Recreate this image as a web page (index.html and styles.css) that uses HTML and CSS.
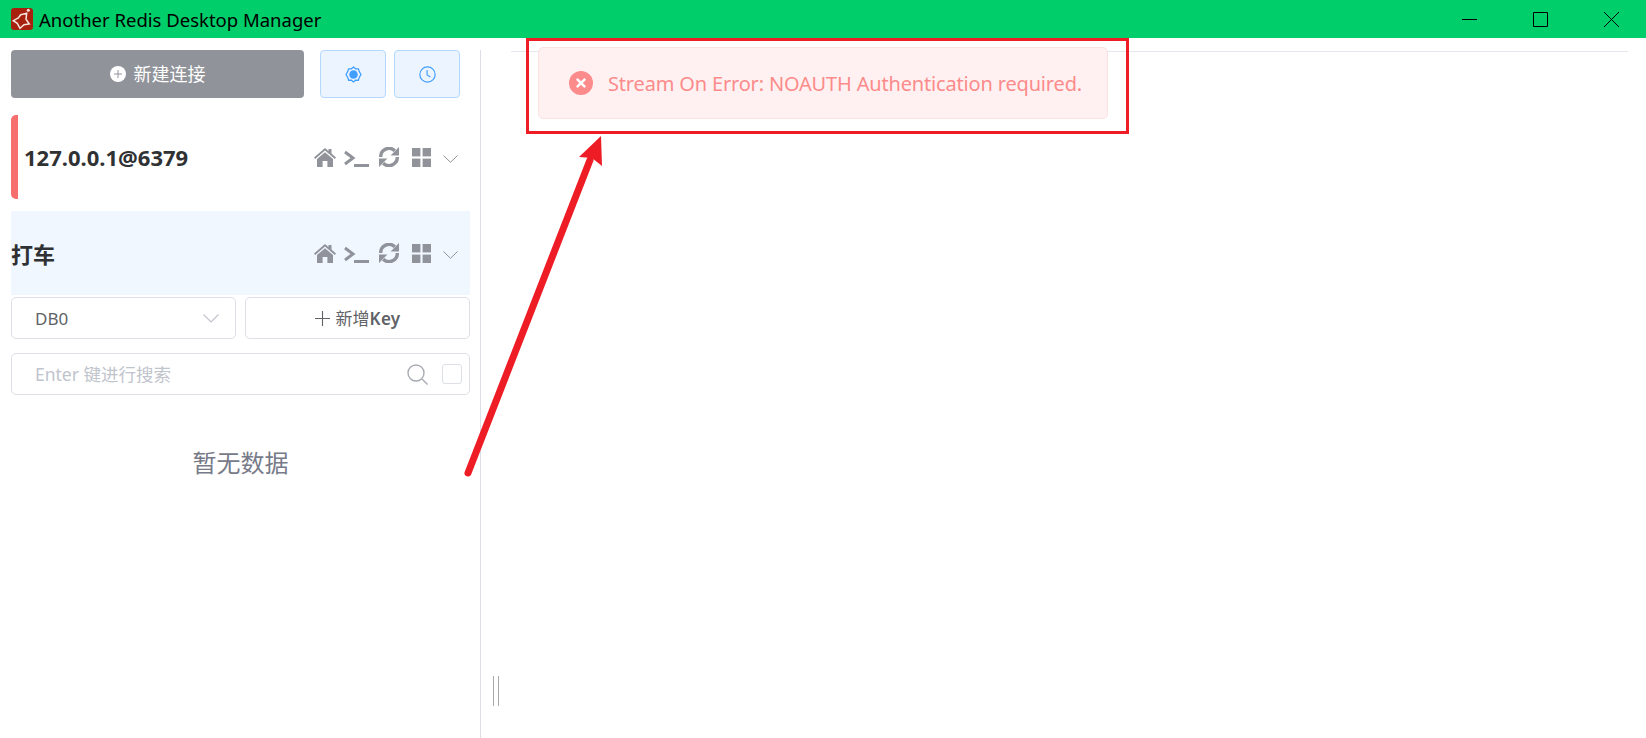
FILE: index.html
```html
<!DOCTYPE html>
<html lang="en">
<head>
    <meta charset="UTF-8">
    <meta name="viewport" content="width=device-width, initial-scale=1.0">
    <title>Another Redis Desktop Manager</title>
    <link rel="stylesheet" href="styles.css">
</head>
<body>
    <svg class="defs" width="0" height="0">
        <symbol id="i-home" viewBox="0 0 22 19">
            <path d="M11 0 L14.5 3 V1 H17.5 V5.6 L22 9.6 L20.8 11 L11 2.6 L1.2 11 L0 9.6 Z"/>
            <path d="M11 4.2 L19 11 V19 H13.4 V13 H8.6 V19 H3 V11 Z"/>
        </symbol>
        <symbol id="i-term" viewBox="0 0 25 19">
            <path d="M1 4 L9 10 L1 16" fill="none" stroke="currentColor" stroke-width="3"/>
            <rect x="10" y="16" width="15" height="3"/>
        </symbol>
        <symbol id="i-refresh" viewBox="0 0 20 20">
            <path d="M1.7 10 A8.3 8.3 0 0 1 15.8 3.8" fill="none" stroke="currentColor" stroke-width="3.4"/>
            <path d="M20 0 V8.4 H11.6 Z"/>
            <path d="M18.3 10 A8.3 8.3 0 0 1 4.2 16.2" fill="none" stroke="currentColor" stroke-width="3.4"/>
            <path d="M0 20 V11.6 H8.4 Z"/>
        </symbol>
        <symbol id="i-grid" viewBox="0 0 19 19">
            <rect width="8.4" height="8.4"/>
            <rect x="10.6" width="8.4" height="8.4"/>
            <rect y="10.6" width="8.4" height="8.4"/>
            <rect x="10.6" y="10.6" width="8.4" height="8.4"/>
        </symbol>
        <symbol id="i-down" viewBox="0 0 15 8">
            <path d="M0.5 0.5 L7.5 7.3 L14.5 0.5" fill="none" stroke="currentColor" stroke-width="1"/>
        </symbol>
    </svg>

    <header class="titlebar">
        <svg class="logo" viewBox="0 0 22 22">
            <rect width="22" height="22" rx="3" fill="#a8210f"/>
            <path d="M9.7 6.7 L15.7 5.3 L15 11.3 L18.3 16 L13 16.7 L9 20.3 L6.3 15.3 L2.3 12.7 L7.3 10 Z" fill="none" stroke="#f6e3dc" stroke-width="1.5"/>
            <circle cx="17.3" cy="2.2" r="1.5" fill="#f6e3dc"/>
        </svg>
        <span class="app-name">Another Redis Desktop Manager</span>
        <div class="win-controls">
            <svg viewBox="0 0 15 15"><path d="M0 7.5 H15"/></svg>
            <svg viewBox="0 0 15 15"><path d="M0.5 0.5 H14.5 V14.5 H0.5 Z"/></svg>
            <svg viewBox="0 0 15 15"><path d="M0 0 L15 15 M15 0 L0 15"/></svg>
        </div>
    </header>

    <main class="layout">
        <aside class="sidebar">
            <div class="top-actions">
                <button class="btn-new">
                    <svg viewBox="0 0 16 16"><circle cx="8" cy="8" r="8" fill="#fff"/><path d="M8 4 V12 M4 8 H12" stroke="#909399" stroke-width="1"/></svg>
                    <span>新建连接</span>
                </button>
                <button class="btn-light">
                    <svg viewBox="0 0 16 16"><path d="M8 1 L10 2.6 L12.6 2.6 L13.3 5 L15 8 L13.3 11 L12.6 13.4 L10 13.4 L8 15 L6 13.4 L3.4 13.4 L2.7 11 L1 8 L2.7 5 L3.4 2.6 L6 2.6 Z" fill="none" stroke="#409eff" stroke-width="1.2"/><circle cx="8" cy="8" r="4" fill="#409eff"/></svg>
                </button>
                <button class="btn-light">
                    <svg viewBox="0 0 16 16"><circle cx="8" cy="8" r="7.2" fill="none" stroke="#409eff" stroke-width="1.1"/><path d="M7.6 3.8 V8.4 L10.6 10.4" fill="none" stroke="#409eff" stroke-width="1.1"/></svg>
                </button>
            </div>

            <div class="conn conn-error">
                <span class="conn-name">127.0.0.1@6379</span>
                <div class="conn-icons">
                    <svg class="home"><use href="#i-home"/></svg>
                    <svg class="term"><use href="#i-term"/></svg>
                    <svg class="refresh"><use href="#i-refresh"/></svg>
                    <svg class="grid"><use href="#i-grid"/></svg>
                    <svg class="down"><use href="#i-down"/></svg>
                </div>
            </div>

            <div class="conn conn-active">
                <span class="conn-name">打车</span>
                <div class="conn-icons">
                    <svg class="home"><use href="#i-home"/></svg>
                    <svg class="term"><use href="#i-term"/></svg>
                    <svg class="refresh"><use href="#i-refresh"/></svg>
                    <svg class="grid"><use href="#i-grid"/></svg>
                    <svg class="down"><use href="#i-down"/></svg>
                </div>
            </div>

            <div class="db-row">
                <div class="db-select">
                    <span>DB0</span>
                    <svg viewBox="0 0 16 9"><path d="M0.5 0.5 L8 8 L15.5 0.5" fill="none" stroke="#c0c4cc" stroke-width="1.2"/></svg>
                </div>
                <button class="btn-add">
                    <svg viewBox="0 0 15 15"><path d="M7.5 0 V15 M0 7.5 H15" stroke="#606266" stroke-width="1.1"/></svg>
                    <span class="btn-add-text">新增<b>Key</b></span>
                </button>
            </div>

            <div class="search">
                <span class="placeholder">Enter 键进行搜索</span>
                <svg class="search-icon" viewBox="0 0 21 21"><circle cx="9" cy="9" r="8" fill="none" stroke="#a8abb2" stroke-width="1.4"/><path d="M15 15 L20.5 20.5" stroke="#a8abb2" stroke-width="1.4"/></svg>
                <span class="check"></span>
            </div>

            <p class="empty">暂无数据</p>
        </aside>

        <section class="content">
            <div class="tab-line"></div>
            <div class="drag-handle"></div>
        </section>
    </main>

    <div class="alert">
        <svg viewBox="0 0 24 24"><circle cx="12" cy="12" r="12" fill="#fc8b8b"/><path d="M7.8 7.8 L16.2 16.2 M16.2 7.8 L7.8 16.2" stroke="#fff" stroke-width="2.4"/></svg>
        <span class="alert-text">Stream On Error: NOAUTH Authentication required.</span>
    </div>

    <!-- red markup drawn on top of the screenshot -->
    <div class="mark-box"></div>
    <svg class="mark-arrow" viewBox="0 0 1646 738">
        <path d="M468 473 L590 160" fill="none" stroke="#ee1c25" stroke-width="7" stroke-linecap="round"/>
        <path d="M601 136 L602 166 L592 158 L579 157 Z" fill="#ee1c25"/>
    </svg>
</body>
</html>
```

FILE: styles.css
```css
* {
    margin: 0;
    padding: 0;
    box-sizing: border-box;
}

html, body {
    height: 100%;
    overflow: hidden;
}

body {
    font-family: "Noto Sans", "Noto Sans CJK SC", sans-serif;
    color: #303133;
    background: #fff;
    display: flex;
    flex-direction: column;
}

button {
    font-family: inherit;
    cursor: pointer;
}

.defs {
    position: absolute;
}

.titlebar {
    height: 38px;
    flex: none;
    background: #00ce6a;
    display: flex;
    align-items: center;
    padding-left: 11px;
    color: #000;
}

.logo {
    width: 22px;
    height: 22px;
}

.app-name {
    margin-left: 6px;
    font-size: 18.5px;
}

.win-controls {
    margin-left: auto;
    padding-right: 27px;
    display: flex;
    gap: 54px;
}

.win-controls svg {
    width: 15px;
    height: 15px;
    margin-left: 2px;
    fill: none;
    stroke: #000;
    stroke-width: 1;
}

.layout {
    flex: 1;
    display: flex;
    min-height: 0;
}

.sidebar {
    width: 481px;
    flex: none;
    margin-top: 12px;
    padding: 0 10px 0 11px;
    border-right: 1px solid #dcdfe6;
}

.top-actions {
    display: flex;
    height: 48px;
    gap: 8px;
}

.btn-new {
    width: 293px;
    margin-right: 8px;
    border: none;
    border-radius: 4px;
    background: #909399;
    color: #fff;
    font-size: 18px;
    display: flex;
    align-items: center;
    justify-content: center;
    gap: 8px;
}

.btn-new span {
    margin-bottom: 2px;
}

.btn-new svg {
    width: 16px;
    height: 16px;
}

.btn-light {
    width: 66px;
    border: 1px solid #b3d8ff;
    border-radius: 4px;
    background: #ecf5ff;
    display: flex;
    align-items: center;
    justify-content: center;
}

.btn-light svg {
    width: 17px;
    height: 17px;
}

.conn {
    height: 84px;
    display: flex;
    align-items: center;
    justify-content: space-between;
    padding-right: 12px;
}

.conn-error {
    margin-top: 17px;
    border-left: 7px solid #f76e6e;
    border-radius: 5px 0 0 5px;
    padding-left: 6px;
}

.conn-active {
    margin-top: 12px;
    background: #f0f7ff;
}

.conn-name {
    font-size: 22px;
    font-weight: 700;
    color: #303133;
}

.conn-icons {
    display: grid;
    grid-template-columns: 30px 35px 33px 31px 15px;
    align-items: center;
    color: #909399;
    fill: #909399;
}

.home { width: 22px; height: 19px; }
.term { width: 25px; height: 19px; }
.refresh { width: 20px; height: 20px; }
.grid { width: 19px; height: 19px; }
.down { width: 15px; height: 8px; margin-top: 3px; }

.db-row {
    margin-top: 2px;
    display: grid;
    grid-template-columns: 1fr 1fr;
    gap: 9px;
}

.db-select,
.btn-add,
.search {
    height: 42px;
    border: 1px solid #dcdfe6;
    border-radius: 5px;
    background: #fff;
    font-size: 17px;
    color: #606266;
    display: flex;
    align-items: center;
}

.db-select {
    padding: 0 16px 0 23px;
    justify-content: space-between;
}

.db-select svg {
    width: 16px;
    height: 9px;
}

.btn-add {
    justify-content: center;
    gap: 6px;
}

.btn-add svg {
    width: 15px;
    height: 15px;
}

.btn-add-text {
    margin-bottom: 2px;
}

.btn-add b {
    font-weight: 600;
    letter-spacing: 0.3px;
}

.search {
    margin-top: 14px;
    padding: 0 7px 0 23px;
}

.placeholder {
    flex: 1;
    font-size: 17.5px;
    color: #c0c4cc;
    margin-bottom: 2px;
}

.search-icon {
    width: 21px;
    height: 21px;
    margin-right: 14px;
}

.check {
    width: 20px;
    height: 20px;
    border: 1px solid #dcdfe6;
    border-radius: 3px;
}

.empty {
    margin-top: 50px;
    text-align: center;
    font-size: 24px;
    line-height: 36px;
    color: #777a88;
}

.content {
    flex: 1;
    position: relative;
    padding: 13px 18px 0 30px;
}

.tab-line {
    height: 1px;
    background: #e4e7ed;
}

.drag-handle {
    position: absolute;
    left: 12px;
    top: 638px;
    width: 6px;
    height: 30px;
    border-left: 1px solid #aaa;
    border-right: 1px solid #aaa;
}

.alert {
    position: absolute;
    left: 538px;
    top: 47px;
    width: 570px;
    height: 72px;
    padding-left: 30px;
    display: flex;
    align-items: center;
    gap: 15px;
    background: #fff1f1;
    border: 1px solid #fde2e2;
    border-radius: 5px;
    color: #fc8b8b;
    font-size: 20px;
    letter-spacing: -0.17px;
}

.alert-text {
    margin-top: 1px;
}

.alert svg {
    width: 24px;
    height: 24px;
}

.mark-box {
    position: absolute;
    left: 526px;
    top: 38px;
    width: 603px;
    height: 96px;
    border: 3px solid #ee1c25;
}

.mark-arrow {
    position: absolute;
    left: 0;
    top: 0;
    width: 1646px;
    height: 738px;
    pointer-events: none;
}
```
